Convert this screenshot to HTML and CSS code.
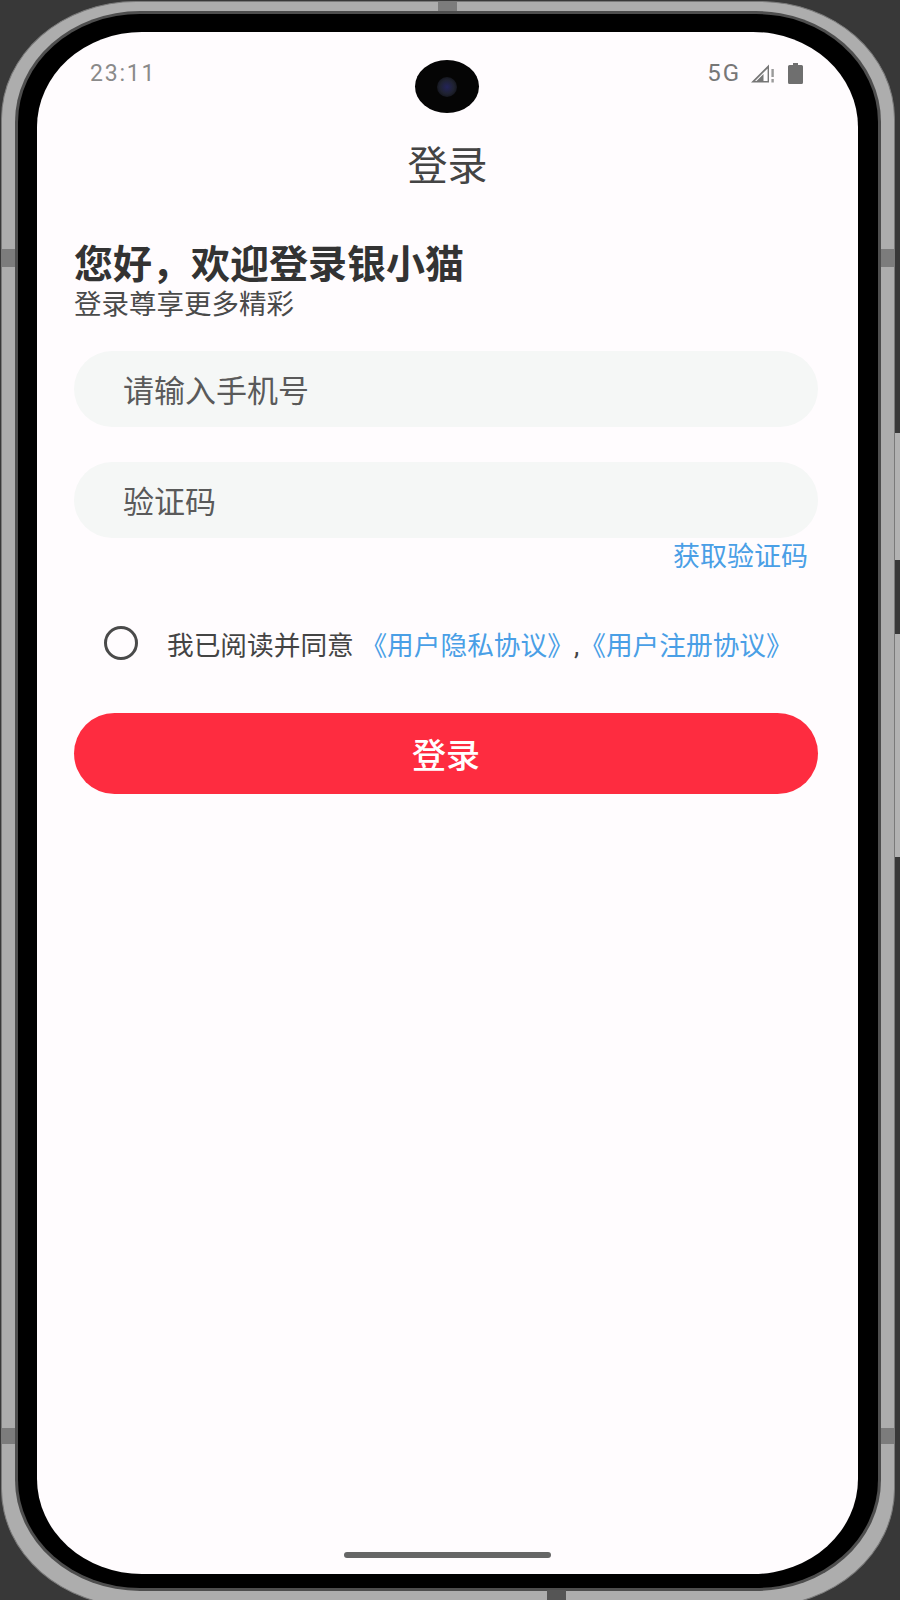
FILE: index.html
```html
<!DOCTYPE html>
<html>
  <head>
    <meta charset="utf-8" />

    <title>登录</title>

    <link rel="stylesheet" href="styles.css">
  </head>

  <body>
    <div id="device">
      <span class="side-key side-key-upper"></span>
      <span class="side-key side-key-lower"></span>
      <div class="shell">
        <span class="band band-left-top"></span>
        <span class="band band-right-top"></span>
        <span class="band band-left-bottom"></span>
        <span class="band band-right-bottom"></span>
        <span class="band band-top"></span>
        <span class="band band-bottom"></span>
        <div class="bezel">
          <div class="screen">
            <div class="camera"><span class="lens"></span></div>

            <div class="status">
              <span class="time">23:11</span>
              <div class="status-icons">
                <span class="network">5G</span>
                <svg class="signal" width="25" height="20" viewBox="0 0 25 20">
                  <path d="M1 19.5 L19 1.5 V19.5 Z M5 18 H17.6 V5.4 Z" fill="#777" fill-rule="evenodd"/>
                  <path d="M6 18.5 L13.5 11 V18.5 Z" fill="#777"/>
                  <rect x="21.4" y="6" width="2.4" height="8" fill="#9a9a9a"/>
                  <rect x="21.4" y="16" width="2.4" height="3.5" fill="#9a9a9a"/>
                </svg>
                <svg class="battery" width="15" height="21" viewBox="0 0 15 21">
                  <path d="M5 0 H10 V2 H13.5 Q15 2 15 3.5 V19.5 Q15 21 13.5 21 H1.5 Q0 21 0 19.5 V3.5 Q0 2 1.5 2 H5 Z" fill="#6f6f6f"/>
                </svg>
              </div>
            </div>

            <div class="page-title">登录</div>

            <div class="content">
              <div class="greeting">您好，欢迎登录银小猫</div>
              <div class="subtitle">登录尊享更多精彩</div>

              <div class="field field-phone">请输入手机号</div>
              <div class="field field-code">验证码</div>
              <a class="get-code">获取验证码</a>

              <div class="agreement">
                <span class="radio"></span>
                <span class="agreement-text">我已阅读并同意 <a>《用户隐私协议》</a>,<a>《用户注册协议》</a></span>
              </div>

              <button class="login">登录</button>
            </div>

            <div class="home-bar"></div>
          </div>
        </div>
      </div>
    </div>
  </body>
</html>
```

FILE: styles.css
```css
body {
  margin: 0;
  background-color: #383838;
  font-family: Roboto, 'Noto Sans CJK SC', sans-serif;
}
#device {
  position: relative;
  box-sizing: border-box;
  width: 900px;
  height: 1600px;
  padding: 1px 5px 0 1px;
  overflow: hidden;
}
.side-key {
  position: absolute;
  right: 0;
  width: 6px;
  background-color: #b2b2b2;
  border-left: 1px solid #5e5e5e;
}
.side-key-upper {
  top: 433px;
  height: 127px;
}
.side-key-lower {
  top: 634px;
  height: 223px;
}
.shell {
  position: relative;
  box-sizing: border-box;
  height: 1606px;
  padding: 12px 16px 18px 16px;
  background-color: #adadad;
  border: 1px solid #7a7a7a;
  border-radius: 135px / 118px;
}
.band {
  position: absolute;
  background-color: #7c7c7c;
}
.band-left-top {
  top: 247px;
  left: 0;
  width: 13px;
  height: 18px;
}
.band-right-top {
  top: 247px;
  right: 0;
  width: 13px;
  height: 18px;
}
.band-left-bottom {
  top: 1426px;
  left: 0;
  width: 13px;
  height: 16px;
}
.band-right-bottom {
  top: 1426px;
  right: 0;
  width: 13px;
  height: 16px;
}
.band-top {
  top: 0;
  left: 436px;
  width: 19px;
  height: 9px;
}
.band-bottom {
  bottom: 6px;
  left: 545px;
  width: 19px;
  height: 10px;
  background-color: #555555;
}
.bezel {
  display: flex;
  box-sizing: border-box;
  height: 100%;
  padding: 18px 20px 14px 19px;
  background-color: #000000;
  border-radius: 122px / 108px;
  box-shadow: 0 0 0 3px #4e4e4e;
}
.screen {
  position: relative;
  display: flex;
  flex-direction: column;
  flex: 1;
  background-color: #fffcfe;
  border-radius: 105px / 95px;
}
.camera {
  position: absolute;
  top: 28px;
  left: 378px;
  display: flex;
  align-items: center;
  justify-content: center;
  width: 64px;
  height: 53px;
  background-color: #050505;
  border-radius: 50%;
}
.lens {
  width: 20px;
  height: 20px;
  background: radial-gradient(circle, #23235a 0%, #1f2230 50%, #070708 100%);
  border-radius: 50%;
}
.status {
  display: flex;
  align-items: center;
  justify-content: space-between;
  height: 30px;
  margin-top: 26px;
  padding: 0 53px;
  color: #8a8a8a;
  font-size: 23px;
}
.time {
  letter-spacing: 1.8px;
}
.status-icons {
  display: flex;
  align-items: center;
  gap: 9px;
}
.network {
  color: #777777;
  font-size: 24px;
  letter-spacing: 2px;
}
.signal {
  margin-right: 4px;
}
.battery {
  margin-right: 2px;
}
.page-title {
  height: 50px;
  margin-top: 54px;
  color: #444444;
  font-size: 40px;
  line-height: 50px;
  text-align: center;
}
.content {
  display: flex;
  flex-direction: column;
  padding: 0 40px 0 37px;
}
.greeting {
  height: 44px;
  margin-top: 51px;
  color: #333333;
  font-size: 39px;
  font-weight: 700;
  line-height: 44px;
}
.subtitle {
  height: 32px;
  margin-top: 2px;
  color: #4a4a4a;
  font-size: 27.5px;
  line-height: 32px;
}
.field {
  box-sizing: border-box;
  height: 76px;
  padding-top: 3px;
  padding-left: 49px;
  background-color: #f5f7f6;
  border-radius: 38px;
  color: #5a5a5a;
  font-size: 31px;
  line-height: 76px;
}
.field-phone {
  margin-top: 30px;
}
.field-code {
  margin-top: 35px;
}
.get-code {
  height: 36px;
  padding-top: 1px;
  padding-right: 10px;
  color: #4a9fe6;
  font-size: 27px;
  line-height: 36px;
  text-align: right;
}
.agreement {
  display: flex;
  align-items: center;
  height: 34px;
  margin-top: 51px;
  padding-left: 30px;
}
.radio {
  box-sizing: border-box;
  width: 34px;
  height: 34px;
  margin-right: 29px;
  border: 3px solid #4a4a4a;
  border-radius: 50%;
}
.agreement-text {
  color: #444444;
  font-size: 26.7px;
  white-space: nowrap;
}
.agreement-text a {
  color: #4a9fe6;
}
.login {
  height: 81px;
  margin-top: 53px;
  padding: 0;
  background-color: #fe2c40;
  border: none;
  border-radius: 41px;
  color: #ffffff;
  font-family: inherit;
  font-size: 34px;
  font-weight: 500;
}
.home-bar {
  align-self: center;
  width: 207px;
  height: 6px;
  margin-top: auto;
  margin-bottom: 16px;
  background-color: #666666;
  border-radius: 3px;
}
```
